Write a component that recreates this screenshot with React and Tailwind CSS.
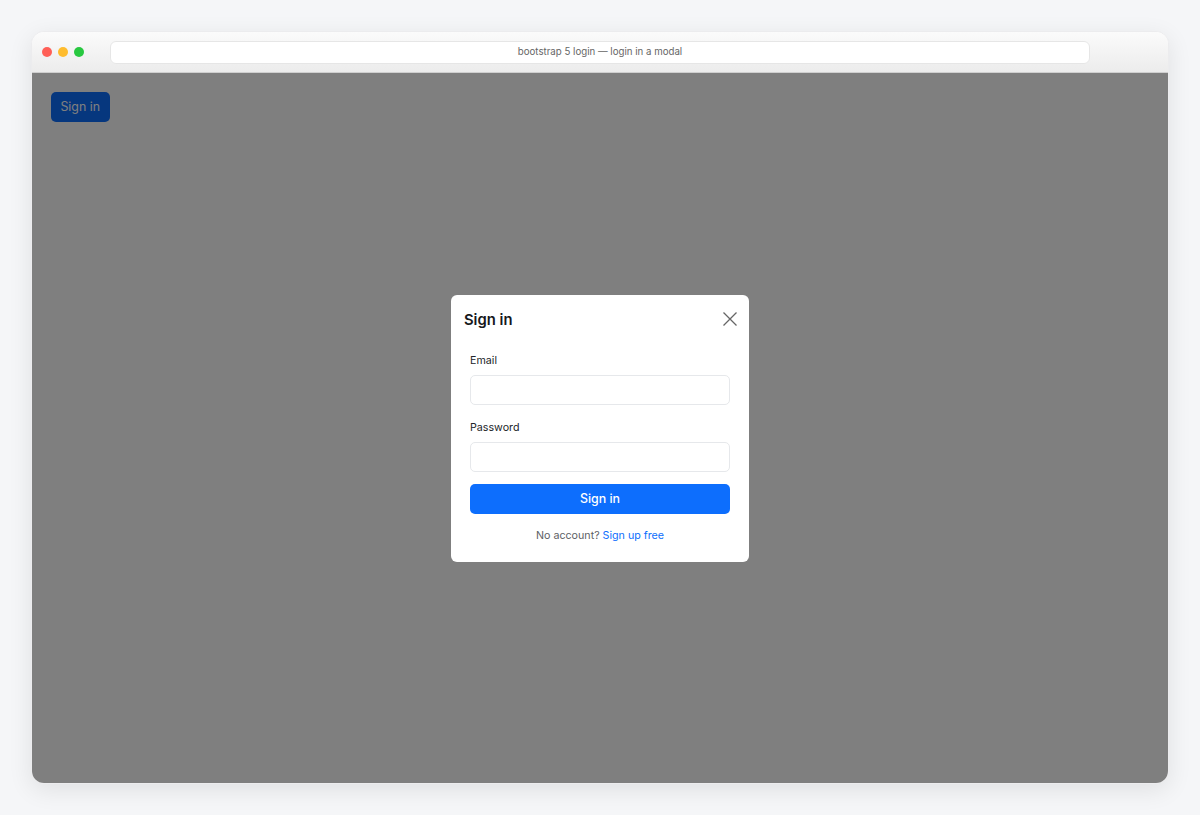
export default function App() {
  return (
    <div className="min-h-[815px] bg-[#f5f6f8] pt-[31px] pl-[31px] pb-[31px] font-['Inter',sans-serif]">
      <div className="h-[753px] w-[1138px] rounded-[13px] overflow-hidden flex flex-col border border-[#ececee] shadow-[0_6px_24px_rgba(0,0,0,0.09)] bg-white">
        <div className="h-[41px] shrink-0 flex items-center pl-[10px] bg-gradient-to-b from-[#fbfbfb] to-[#ececec] border-b border-[#cfcfcf]">
          <div className="flex gap-1.5 w-[68px] shrink-0">
            <span className="w-2.5 h-2.5 rounded-full bg-[#ff5f57]"></span>
            <span className="w-2.5 h-2.5 rounded-full bg-[#febc2e]"></span>
            <span className="w-2.5 h-2.5 rounded-full bg-[#28c840]"></span>
          </div>
          <div className="w-[980px] h-[23px] rounded-md bg-white border border-[#e6e6e6] flex items-center justify-center text-[9.7px] text-[#666666]">
            bootstrap 5 login — login in a modal
          </div>
        </div>
        <div className="relative flex-1 bg-white pl-[18.5px] pt-[19px]">
          <button className="block h-[30px] w-[59.5px] pt-px rounded-[5px] bg-[#0d6efd] text-white text-[12.4px]">Sign in</button>
          <div className="absolute inset-0 bg-black/50 flex items-center justify-center pt-[0.5px]">
            <div className="w-[298px] bg-white rounded-[6px] flex flex-col">
              <div className="h-[49px] flex items-center justify-between pl-[13px] pr-[12px]">
                <h5 className="text-[14.8px] font-semibold text-[#16181b] pt-[2px]">Sign in</h5>
                <svg width="14" height="14" viewBox="0 0 14 14" fill="none" stroke="#666666" strokeWidth="1.3"><path d="M0.5 0.5L13.5 13.5M13.5 0.5L0.5 13.5" /></svg>
              </div>
              <div className="px-[19px] pt-[9px] pb-[17px] flex flex-col">
                <label className="text-[10.7px] text-[#212529] mb-[7px] leading-[15px] h-[15px]">Email</label>
                <div className="h-[30px] rounded-[5px] border border-[#e6e8eb] bg-white mb-[15px]"></div>
                <label className="text-[10.7px] text-[#212529] mb-[7px] leading-[15px] h-[15px]">Password</label>
                <div className="h-[30px] rounded-[5px] border border-[#e6e8eb] bg-white mb-[12.5px]"></div>
                <button className="h-[30px] pt-px rounded-[5px] bg-[#0d6efd] text-white text-[12.4px] font-medium">Sign in</button>
                <p className="text-[10.7px] text-[#5c6064] text-center mt-3 leading-[19px]">No account? <a className="text-[#0d6efd]">Sign up free</a></p>
              </div>
            </div>
          </div>
        </div>
      </div>
    </div>
  );
}
